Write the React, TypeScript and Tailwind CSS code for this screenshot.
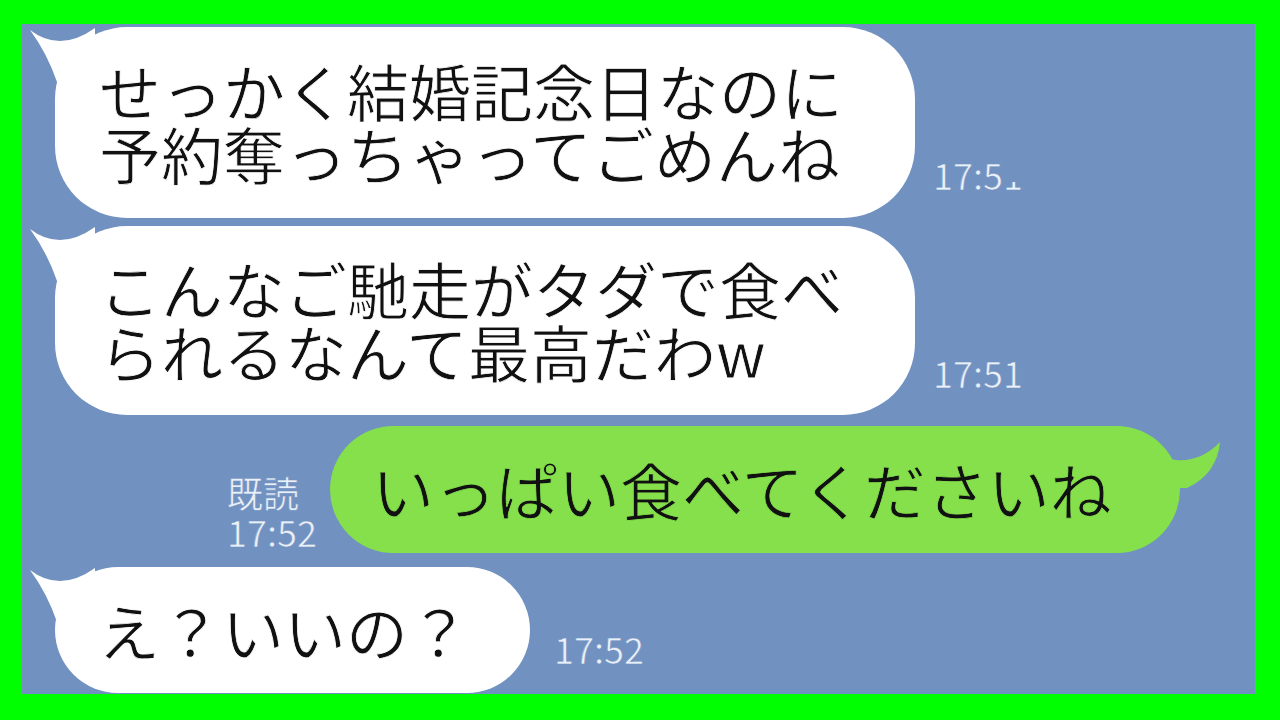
const jp = "font-['Noto_Sans_CJK_JP','Noto_Sans',sans-serif]";

function LeftTail() {
  return (
    <svg
      className="absolute left-[-27px] top-0"
      width="80"
      height="70"
      viewBox="-27 0 80 70"
    >
      <path d="M -25 3 Q 5 26 40 1 L 40 50 L 2 55 Q -8 26 -25 3 Z" fill="#ffffff" />
    </svg>
  );
}

function RightTail() {
  return (
    <svg
      className="absolute right-[-44px] top-0"
      width="90"
      height="70"
      viewBox="-45 0 90 70"
    >
      <path d="M -30 30 L -3 34 Q 22 36 41 16 Q 38 48 8 62 L -30 62 Z" fill="#85e04b" />
    </svg>
  );
}

function Time({ children, className }: { children: React.ReactNode; className?: string }) {
  return (
    <div className={`text-[36px] leading-none text-[#eaf0f8] [-webkit-text-stroke:0.6px_#7191c1] ${jp} ${className ?? ""}`}>
      {children}
    </div>
  );
}

export default function App() {
  return (
    <div className="w-[1280px] h-[720px] bg-[#00ff00] pl-[22px] pt-[24px] pr-[25px] pb-[26px]">
      <div className={`h-full bg-[#7191c1] flex flex-col pt-[3px] ${jp}`}>
        {/* received 1 */}
        <div className="flex items-end pl-[33px]">
          <div className="relative w-[860px] h-[191px] rounded-[72px] bg-white pl-[44px] pt-[32px] text-[62px] leading-[63px] text-[#111] [-webkit-text-stroke:0.8px_#ffffff]">
            <LeftTail />
            <p className="relative">せっかく結婚記念日なのに</p>
            <p className="relative">予約奪っちゃってごめんね</p>
          </div>
          <Time className="ml-[18px] mb-[26px]">
            17:5<span className="inline-block [clip-path:inset(72%_0_0_0)]">1</span>
          </Time>
        </div>

        {/* received 2 */}
        <div className="flex items-end pl-[33px] mt-[8px]">
          <div className="relative w-[860px] h-[189px] rounded-[72px] bg-white pl-[44px] pt-[31px] text-[62px] leading-[63px] text-[#111] [-webkit-text-stroke:0.8px_#ffffff]">
            <LeftTail />
            <p className="relative">こんなご馳走がタダで食べ</p>
            <p className="relative">られるなんて最高だわw</p>
          </div>
          <Time className="ml-[18px] mb-[25px]">17:51</Time>
        </div>

        {/* sent */}
        <div className="flex items-end justify-end pr-[75px] mt-[11px]">
          <div className="mr-[13px] mb-[2px] text-[#eaf0f8] text-[36px] leading-[39px] [-webkit-text-stroke:0.6px_#7191c1]">
            <div>既読</div>
            <div>17:52</div>
          </div>
          <div className="relative w-[850px] h-[127px] rounded-[64px] bg-[#85e04b] pl-[42px] flex items-center text-[62px] leading-[63px] text-[#111] [-webkit-text-stroke:0.8px_#85e04b]">
            <RightTail />
            <p className="relative">いっぱい食べてくださいね</p>
          </div>
        </div>

        {/* received 3 */}
        <div className="flex items-end pl-[33px] mt-[14px]">
          <div className="relative w-[475px] h-[126px] rounded-[64px] bg-white pl-[43px] flex items-center text-[62px] leading-[63px] text-[#111] [-webkit-text-stroke:0.8px_#ffffff]">
            <LeftTail />
            <p className="relative">え？いいの？</p>
          </div>
          <Time className="ml-[24px] mb-[27px]">17:52</Time>
        </div>
      </div>
    </div>
  );
}
